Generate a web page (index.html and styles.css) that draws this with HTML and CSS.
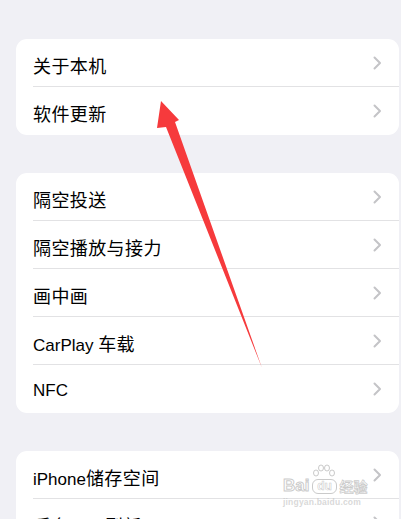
FILE: index.html
```html
<!DOCTYPE html>
<html>
<head>
    <meta charset="utf-8">
    <title>通用</title>
    <link rel="stylesheet" href="styles.css">
</head>
<body>
    <div class="page">
        <div class="group">
            <div class="row"><div class="row-inner"><span class="label"><span class="cn">关于本机</span></span><svg class="chevron" width="9" height="14" viewBox="0 0 9 14"><polyline points="1.5,1.5 7,7 1.5,12.5"/></svg></div></div>
            <div class="row"><div class="row-inner"><span class="label"><span class="cn">软件更新</span></span><svg class="chevron" width="9" height="14" viewBox="0 0 9 14"><polyline points="1.5,1.5 7,7 1.5,12.5"/></svg></div></div>
        </div>

        <div class="group">
            <div class="row"><div class="row-inner"><span class="label"><span class="cn">隔空投送</span></span><svg class="chevron" width="9" height="14" viewBox="0 0 9 14"><polyline points="1.5,1.5 7,7 1.5,12.5"/></svg></div></div>
            <div class="row"><div class="row-inner"><span class="label"><span class="cn">隔空播放与接力</span></span><svg class="chevron" width="9" height="14" viewBox="0 0 9 14"><polyline points="1.5,1.5 7,7 1.5,12.5"/></svg></div></div>
            <div class="row"><div class="row-inner"><span class="label"><span class="cn">画中画</span></span><svg class="chevron" width="9" height="14" viewBox="0 0 9 14"><polyline points="1.5,1.5 7,7 1.5,12.5"/></svg></div></div>
            <div class="row"><div class="row-inner"><span class="label">CarPlay <span class="cn">车载</span></span><svg class="chevron" width="9" height="14" viewBox="0 0 9 14"><polyline points="1.5,1.5 7,7 1.5,12.5"/></svg></div></div>
            <div class="row"><div class="row-inner"><span class="label">NFC</span><svg class="chevron" width="9" height="14" viewBox="0 0 9 14"><polyline points="1.5,1.5 7,7 1.5,12.5"/></svg></div></div>
        </div>

        <div class="group">
            <div class="row"><div class="row-inner"><span class="label">iPhone<span class="cn">储存空间</span></span><svg class="chevron" width="9" height="14" viewBox="0 0 9 14"><polyline points="1.5,1.5 7,7 1.5,12.5"/></svg></div></div>
            <div class="row"><div class="row-inner"><span class="label"><span class="cn">后台</span>App <span class="cn">刷新</span></span><svg class="chevron" width="9" height="14" viewBox="0 0 9 14"><polyline points="1.5,1.5 7,7 1.5,12.5"/></svg></div></div>
        </div>
    </div>

    <!-- red annotation arrow -->
    <svg class="arrow" width="401" height="519" viewBox="0 0 401 519">
        <polygon points="161,101 179,120 175,122 262,368 166,127 157,128"/>
    </svg>

    <!-- watermark -->
    <div class="watermark">
        <div class="wm-logo">
            <span class="wm-bai">Bai</span>
            <span class="wm-du">
                <svg class="wm-paw" width="28" height="15" viewBox="0 0 28 15">
                    <ellipse cx="6" cy="9" rx="2.5" ry="3"/>
                    <ellipse cx="11" cy="4" rx="2.5" ry="3"/>
                    <ellipse cx="17" cy="4" rx="2.5" ry="3"/>
                    <ellipse cx="22" cy="9" rx="2.5" ry="3"/>
                </svg>
                <span class="wm-du-box">du</span>
            </span>
            <span class="wm-cn">经验</span>
        </div>
        <div class="wm-url">jingyan.baidu.com</div>
    </div>
</body>
</html>
```

FILE: styles.css
```css
body {
    margin: 0;
    width: 401px;
    height: 519px;
    overflow: hidden;
    position: relative;
    background-color: #f0f0f5;
    font-family: "Liberation Sans", "Noto Sans CJK SC", sans-serif;
    color: #000;
}

.page {
    display: flex;
    flex-direction: column;
    gap: 38px;
    padding: 39px 0 0 16px;
}

.group {
    width: 383px;
    background-color: #fff;
    border-radius: 11px;
    overflow: hidden;
}

.row {
    padding-left: 17px;
}

.row-inner {
    display: flex;
    align-items: center;
    justify-content: space-between;
    height: 47px;
    padding-right: 17px;
    border-bottom: 1px solid #e2e2e4;
}

.row:last-child .row-inner {
    border-bottom: none;
    height: 48px;
}

.label {
    font-size: 17px;
    white-space: nowrap;
    margin-top: 4px;
}

.cn {
    font-family: "Noto Sans CJK SC", sans-serif;
    font-size: 18px;
    letter-spacing: 0.4px;
}

.chevron polyline {
    fill: none;
    stroke: #c4c4c7;
    stroke-width: 2;
    stroke-linecap: round;
    stroke-linejoin: round;
}

.arrow {
    position: absolute;
    left: 0;
    top: 0;
}

.arrow polygon {
    fill: #f63a3c;
}

.watermark {
    position: absolute;
    left: 283px;
    top: 464px;
    width: 92px;
    color: rgba(255, 255, 255, 0.5);
    font-family: "Liberation Sans", "Noto Sans CJK SC", sans-serif;
}

.wm-logo {
    display: flex;
    align-items: flex-end;
    gap: 1px;
}

.wm-bai {
    font-size: 17px;
    font-weight: bold;
    line-height: 16px;
    -webkit-text-stroke: 1px rgba(180, 180, 180, 0.7);
}

.wm-du {
    display: flex;
    flex-direction: column;
    align-items: center;
}

.wm-paw ellipse {
    fill: rgba(255, 255, 255, 0.4);
    stroke: rgba(180, 180, 180, 0.7);
    stroke-width: 1;
}

.wm-du-box {
    font-size: 12px;
    font-weight: bold;
    line-height: 13px;
    padding: 0 4px;
    border: 1px solid rgba(180, 180, 180, 0.7);
    border-radius: 6px;
    -webkit-text-stroke: 0.6px rgba(180, 180, 180, 0.7);
}

.wm-cn {
    font-family: "Noto Sans CJK SC", sans-serif;
    font-size: 14px;
    font-weight: bold;
    line-height: 16px;
    -webkit-text-stroke: 0.8px rgba(180, 180, 180, 0.7);
}

.wm-url {
    margin-top: 4px;
    font-size: 8.5px;
    font-weight: bold;
    line-height: 9px;
    color: rgba(190, 190, 190, 0.6);
    letter-spacing: 0.2px;
}
```
